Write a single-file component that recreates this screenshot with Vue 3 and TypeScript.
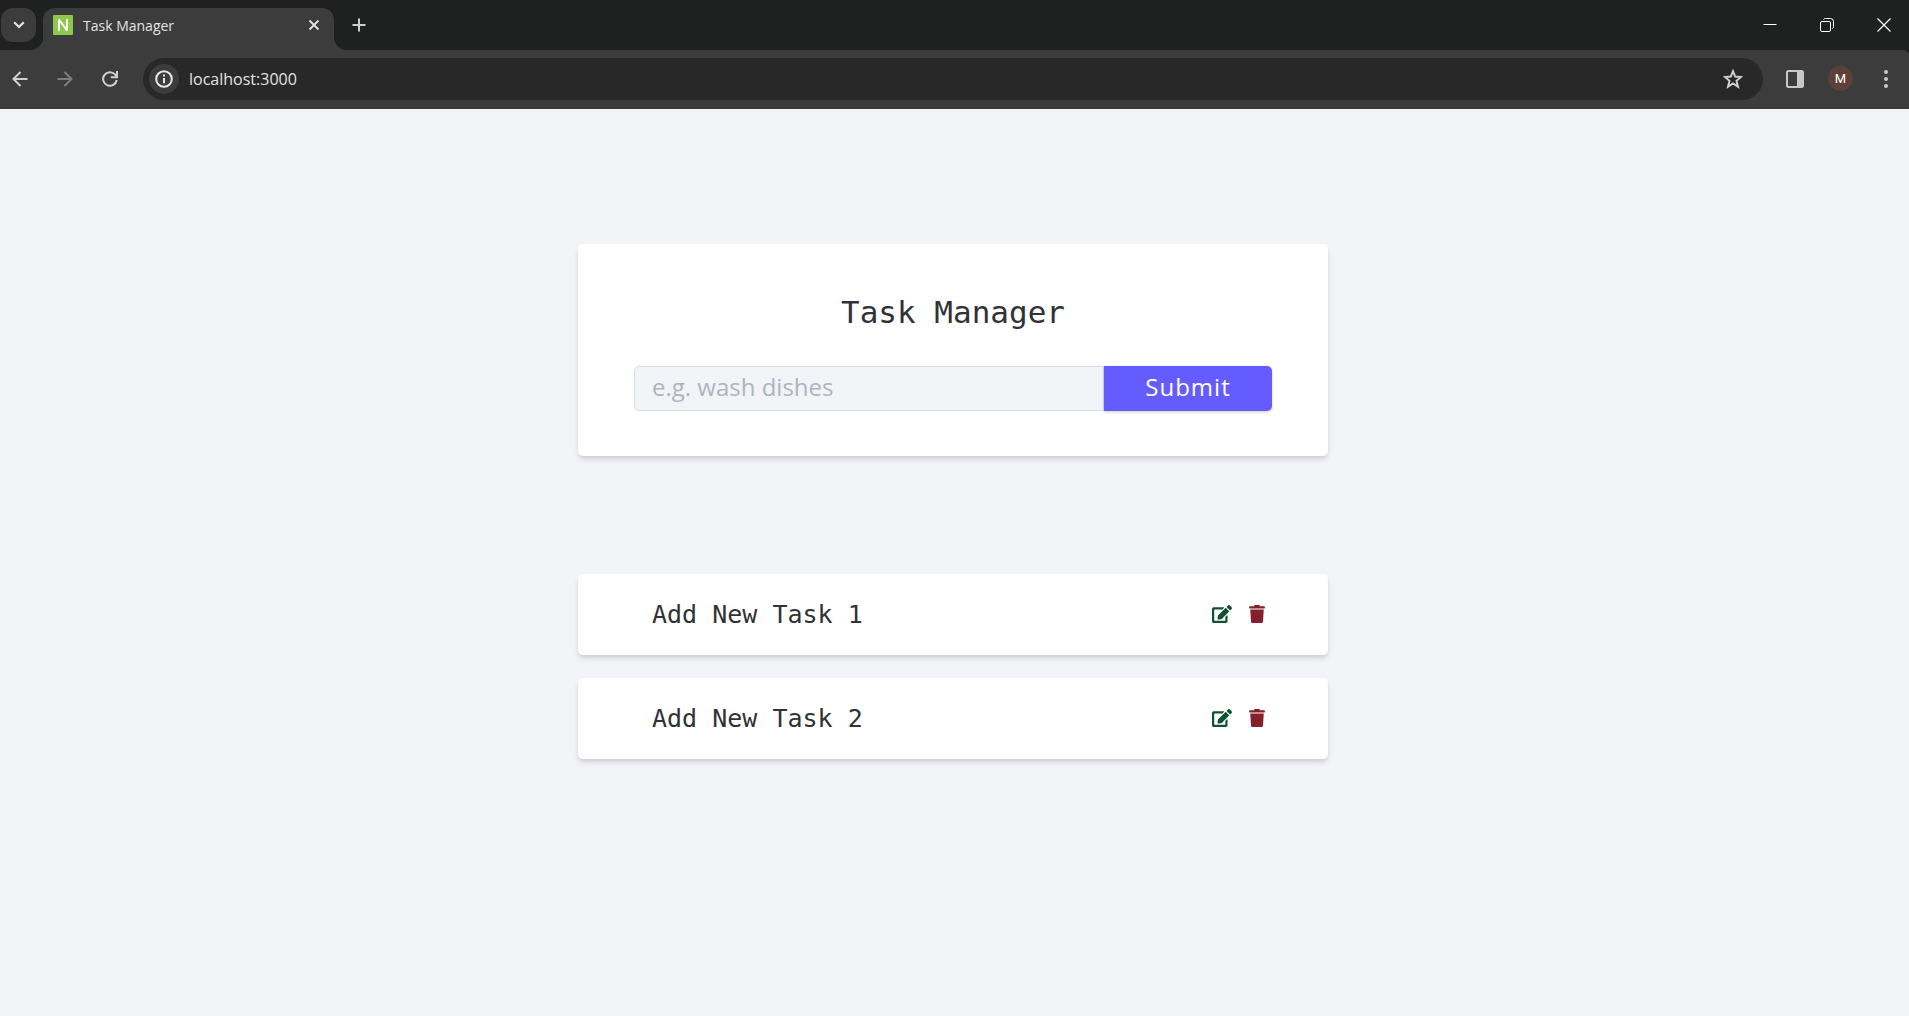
<script setup lang="ts">
import { ref } from 'vue'

interface Task {
  id: number
  name: string
}

const draft = ref('')
const tasks = ref<Task[]>([
  { id: 1, name: 'Add New Task 1' },
  { id: 2, name: 'Add New Task 2' },
])

function addTask() {
  const name = draft.value.trim()
  if (!name) return
  tasks.value.push({ id: Date.now(), name })
  draft.value = ''
}

function removeTask(id: number) {
  tasks.value = tasks.value.filter((task) => task.id !== id)
}
</script>

<template>
  <div class="window">
    <header class="chrome">
      <div class="tabstrip">
        <button class="tab-search" type="button" aria-label="Search tabs">
          <svg width="14" height="14" viewBox="0 0 14 14"><path d="M2.200 4.200L7 9l4.800-4.800" fill="none" stroke="#e3e3e3" stroke-width="2.200" /></svg>
        </button>
        <div class="tab">
          <svg class="favicon" width="20" height="20" viewBox="0 0 20 20">
            <rect width="20" height="20" rx="1" fill="#8bc84b" />
            <path d="M6 16V4.500L14 15.500V4" fill="none" stroke="#fff" stroke-width="2" stroke-linejoin="bevel" />
          </svg>
          <span class="tab-title">Task Manager</span>
          <button class="icon-button tab-close" type="button" aria-label="Close tab">
            <svg width="12" height="12" viewBox="0 0 12 12"><path d="M1.500 1.500l9 9M10.500 1.500l-9 9" stroke="#e3e3e3" stroke-width="1.800" /></svg>
          </button>
        </div>
        <button class="icon-button new-tab" type="button" aria-label="New tab">
          <svg width="14" height="14" viewBox="0 0 14 14"><path d="M7 0.500v13M0.500 7h13" stroke="#d0d0d0" stroke-width="2" /></svg>
        </button>
        <div class="window-controls">
          <button class="icon-button" type="button" aria-label="Minimize">
            <svg width="14" height="14" viewBox="0 0 14 14"><path d="M0.500 6.500h13" stroke="#fff" /></svg>
          </button>
          <button class="icon-button" type="button" aria-label="Restore">
            <svg width="14" height="14" viewBox="0 0 14 14" fill="none" stroke="#fff"><rect x="0.500" y="3.500" width="10" height="10" rx="1.500" /><path d="M3.500 1.500q.5-1 2-1h5q3 0 3 3v5q0 1.500-1 2" /></svg>
          </button>
          <button class="icon-button" type="button" aria-label="Close window">
            <svg width="14" height="14" viewBox="0 0 14 14"><path d="M0.500 0.500l13 13M13.500 0.500l-13 13" stroke="#fff" stroke-width="1.200" /></svg>
          </button>
        </div>
      </div>

      <div class="toolbar">
        <nav class="history">
          <button class="icon-button" type="button" aria-label="Back">
            <svg width="16" height="16" viewBox="0 0 16 16"><path d="M15.500 8H2M8.500 1L1.500 8l7 7" fill="none" stroke="#d0d0d0" stroke-width="2" /></svg>
          </button>
          <button class="icon-button" type="button" aria-label="Forward">
            <svg width="16" height="16" viewBox="0 0 16 16"><path d="M0.500 8H14M7.500 1l7 7-7 7" fill="none" stroke="#7d7d7d" stroke-width="2" /></svg>
          </button>
          <button class="icon-button" type="button" aria-label="Reload">
            <svg width="16" height="16" viewBox="0 0 16 16"><path d="M14.700 9A6.800 6.800 0 1 1 13 3.400L14.800 5.500M15 0v6.200H8.800" fill="none" stroke="#d0d0d0" stroke-width="2" /></svg>
          </button>
        </nav>
        <div class="omnibox">
          <button class="site-info" type="button" aria-label="View site information">
            <svg width="18" height="18" viewBox="0 0 18 18"><circle cx="9" cy="9" r="7.800" fill="none" stroke="#e8e8e8" stroke-width="2" /><path d="M9 8v5.200M9 4.600v2" stroke="#e8e8e8" stroke-width="2" /></svg>
          </button>
          <input class="address" type="text" value="localhost:3000" aria-label="Address" />
          <button class="icon-button" type="button" aria-label="Bookmark this page">
            <svg width="20" height="20" viewBox="0 0 20 20"><path d="M10 2.200l2.200 5.400 5.800.4-4.500 3.800 1.500 5.900-5-3.200-5 3.200 1.500-5.900L2 8l5.800-.4z" fill="none" stroke="#d0d0d0" stroke-width="2" /></svg>
          </button>
        </div>
        <div class="actions">
          <button class="icon-button" type="button" aria-label="Side panel">
            <svg width="18" height="18" viewBox="0 0 18 18"><rect x="1" y="1" width="16" height="16" rx="1.500" fill="none" stroke="#c8c8c8" stroke-width="2" /><path d="M11 1h6v16h-6z" fill="#c8c8c8" /></svg>
          </button>
          <button class="avatar" type="button" aria-label="Profile M">M</button>
          <button class="icon-button" type="button" aria-label="Menu">
            <svg width="18" height="18" viewBox="0 0 18 18" fill="#c8c8c8"><circle cx="9" cy="2" r="2" /><circle cx="9" cy="9" r="2" /><circle cx="9" cy="16" r="2" /></svg>
          </button>
        </div>
      </div>
    </header>

    <main class="page">
      <form class="card task-form" @submit.prevent="addTask">
        <h1>Task Manager</h1>
        <div class="form-control">
          <input v-model="draft" class="task-input" type="text" placeholder="e.g. wash dishes" aria-label="New task" />
          <button class="submit" type="submit">Submit</button>
        </div>
      </form>

      <section class="tasks" aria-label="Tasks">
        <article v-for="task in tasks" :key="task.id" class="card task">
          <h2>{{ task.name }}</h2>
          <div class="task-links">
            <a href="#edit" :aria-label="`Edit ${task.name}`">
              <svg width="20" height="18" viewBox="0 0 576 512"><path fill="#0f5132" d="M402.600 83.200l90.200 90.200c3.800 3.800 3.800 10 0 13.800L274.400 405.600l-92.800 10.300c-12.400 1.400-22.900-9.100-21.500-21.500l10.300-92.800L388.800 83.200c3.800-3.800 10-3.800 13.800 0zm162-22.900l-48.800-48.800c-15.200-15.200-39.900-15.200-55.200 0l-35.400 35.400c-3.800 3.800-3.800 10 0 13.800l90.200 90.200c3.800 3.800 10 3.800 13.800 0l35.400-35.400c15.200-15.300 15.200-40 0-55.200zM384 346.200V448H64V128h229.800c3.200 0 6.200-1.300 8.500-3.500l40-40c7.600-7.600 2.200-20.500-8.500-20.500H48C21.500 64 0 85.500 0 112v352c0 26.500 21.500 48 48 48h352c26.500 0 48-21.500 48-48V306.200c0-10.700-12.900-16-20.500-8.500l-40 40c-2.200 2.300-3.500 5.300-3.500 8.500z" /></svg>
            </a>
            <button class="icon-button" type="button" :aria-label="`Delete ${task.name}`" @click="removeTask(task.id)">
              <svg width="16" height="18" viewBox="0 0 448 512"><path fill="#842029" d="M432 32H312l-9.400-18.700A24 24 0 0 0 281.100 0H166.800a23.700 23.700 0 0 0-21.400 13.300L136 32H16A16 16 0 0 0 0 48v32a16 16 0 0 0 16 16h416a16 16 0 0 0 16-16V48a16 16 0 0 0-16-16zM53.200 467a48 48 0 0 0 47.900 45h245.800a48 48 0 0 0 47.900-45L416 128H32z" /></svg>
            </button>
          </div>
        </article>
      </section>
    </main>
  </div>
</template>

<style>
body {
  background: #f2f4f8;
}
</style>

<style scoped>
* {
  box-sizing: border-box;
}

.window {
  display: flex;
  flex-direction: column;
  font-family: "Open Sans", "Noto Sans", sans-serif;
}

svg {
  display: block;
}

button {
  border: 0;
  cursor: pointer;
  font-family: inherit;
}

.icon-button {
  padding: 0;
  background: none;
}

.chrome {
  background: #1f2120;
}

.tabstrip {
  display: flex;
  height: 50px;
}

.tab-search {
  display: grid;
  place-items: center;
  width: 35px;
  height: 34px;
  margin: 8px 7px 0 1px;
  padding: 0;
  border-radius: 12px;
  background: #3c3c3c;
}

.tab {
  position: relative;
  display: flex;
  align-items: center;
  width: 291px;
  margin-top: 8px;
  padding: 0 14px 8px 10px;
  border-radius: 12px 12px 0 0;
  background: #3c3c3c;
}

.tab::before,
.tab::after {
  content: "";
  position: absolute;
  bottom: 0;
  width: 14px;
  height: 14px;
}

.tab::before {
  right: 100%;
  background: radial-gradient(circle at 0 0, transparent 14px, #3c3c3c 15px);
}

.tab::after {
  left: 100%;
  background: radial-gradient(circle at 100% 0, transparent 14px, #3c3c3c 15px);
}

.tab-title {
  flex: 1;
  margin-left: 10px;
  color: #e3e3e3;
  font-size: 14px;
}

.new-tab {
  margin-left: 18px;
}

.window-controls {
  display: flex;
  gap: 43px;
  margin-left: auto;
  padding: 0 18px 1px 0;
}

.toolbar {
  display: flex;
  align-items: center;
  height: 59px;
  padding: 0 14px 2px 12px;
  border-radius: 0 6px 0 0;
  background: #3c3c3c;
}

.history {
  display: flex;
  gap: 29px;
}

.omnibox {
  display: flex;
  flex: 1;
  align-items: center;
  height: 42px;
  margin-left: 25px;
  padding: 0 20px 0 6px;
  border-radius: 21px;
  background: #282828;
}

.site-info {
  display: grid;
  place-items: center;
  width: 30px;
  height: 30px;
  padding: 0;
  border-radius: 50%;
  background: #3c3c3c;
}

.address {
  flex: 1;
  min-width: 0;
  margin-left: 10px;
  padding: 0;
  border: 0;
  background: none;
  color: #e3e3e3;
  font: 16px "Open Sans", "Noto Sans", sans-serif;
}

.actions {
  display: flex;
  align-items: center;
  gap: 24px;
  margin-left: 23px;
}

.avatar {
  width: 25px;
  height: 25px;
  padding: 0;
  border-radius: 50%;
  background: #5d4037;
  color: #fff;
  font-family: Roboto, sans-serif;
  font-size: 13px;
}

.page {
  padding: 135px 3px 80px 0;
  color: #303336;
}

.card {
  border-radius: 5px;
  background: #fff;
  box-shadow: 0 4px 6px -1px rgba(0, 0, 0, 0.12), 0 2px 4px -1px rgba(0, 0, 0, 0.08);
}

.task-form {
  max-width: 750px;
  margin: 0 auto;
  padding: 48px 56px 45px;
}

h1,
h2 {
  margin: 0;
  font-family: "DejaVu Sans Mono", monospace;
  font-weight: 400;
}

h1 {
  margin-bottom: 34px;
  font-size: 31px;
  line-height: 40px;
  text-align: center;
}

.form-control {
  display: flex;
  height: 45px;
}

.task-input {
  flex: 1;
  min-width: 0;
  padding: 0 17px 4px;
  border: 1px solid #d9dce9;
  border-radius: 5px 0 0 5px;
  background: #f2f4f8;
  color: #303336;
  font: 24px "Open Sans", sans-serif;
}

.task-input::placeholder {
  color: #adb5c2;
  opacity: 1;
}

.submit {
  width: 168px;
  padding: 0 0 4px;
  border-radius: 0 5px 5px 0;
  background: #645cff;
  box-shadow: 0 1px 3px rgba(0, 0, 0, 0.2);
  color: #fff;
  font-size: 24px;
  letter-spacing: 1px;
}

.tasks {
  display: flex;
  flex-direction: column;
  gap: 23px;
  max-width: 750px;
  margin: 118px auto 0;
}

.task {
  display: flex;
  align-items: center;
  justify-content: space-between;
  min-height: 81px;
  padding: 0 63px 0 74px;
}

h2 {
  font-size: 25px;
  line-height: 32px;
}

.task-links {
  display: flex;
  align-items: center;
  gap: 17px;
  padding-bottom: 2px;
}
</style>
